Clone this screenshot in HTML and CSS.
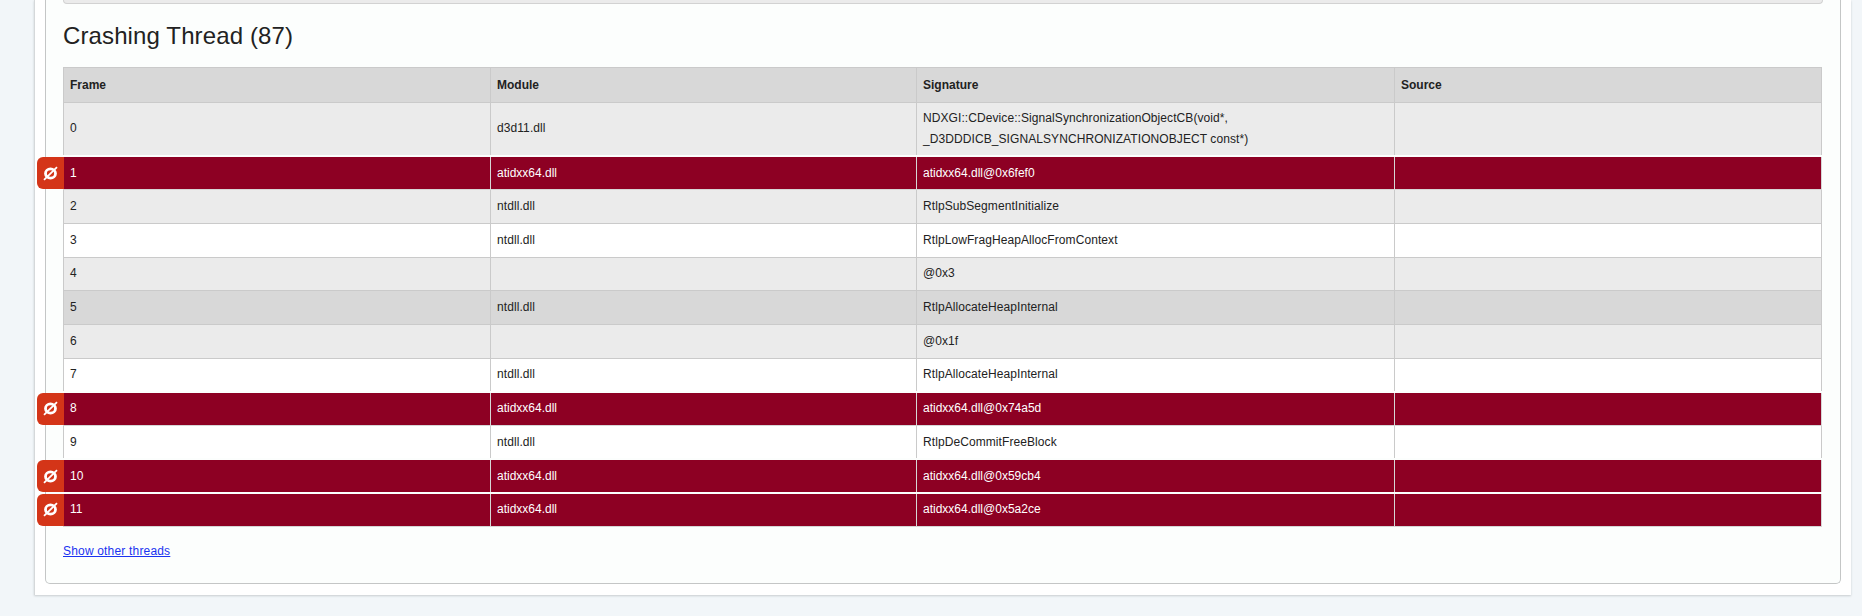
FILE: index.html
```html
<!DOCTYPE html>
<html lang="en">
<head>
<meta charset="utf-8">
<title>Crashing Thread</title>
<link rel="stylesheet" href="styles.css">
</head>
<body>
<svg class="defs" width="0" height="0" aria-hidden="true">
  <symbol id="no" viewBox="0 0 15 15">
    <ellipse cx="7.5" cy="7.5" rx="5" ry="4.6" fill="none" stroke="#fff" stroke-width="2.8"/>
    <path d="M1 13.8 14 1.2" fill="none" stroke="#fff" stroke-width="1.8"/>
  </symbol>
</svg>
<main class="page">
  <section class="panel">
    <div class="prev-box"></div>
    <h2 class="title">Crashing Thread (87)</h2>
    <table class="frames">
      <colgroup><col class="c1"><col class="c2"><col class="c3"><col class="c4"></colgroup>
      <thead>
        <tr><th>Frame</th><th>Module</th><th>Signature</th><th>Source</th></tr>
      </thead>
      <tbody>
        <tr class="g1 tall"><td>0</td><td>d3d11.dll</td><td>NDXGI::CDevice::SignalSynchronizationObjectCB(void*, _D3DDDICB_SIGNALSYNCHRONIZATIONOBJECT const*)</td><td></td></tr>
        <tr class="bad"><td><span class="flag"><svg class="no"><use href="#no"/></svg></span>1</td><td>atidxx64.dll</td><td>atidxx64.dll@0x6fef0</td><td></td></tr>
        <tr class="g1"><td>2</td><td>ntdll.dll</td><td>RtlpSubSegmentInitialize</td><td></td></tr>
        <tr><td>3</td><td>ntdll.dll</td><td>RtlpLowFragHeapAllocFromContext</td><td></td></tr>
        <tr class="g1"><td>4</td><td></td><td>@0x3</td><td></td></tr>
        <tr class="g2"><td>5</td><td>ntdll.dll</td><td>RtlpAllocateHeapInternal</td><td></td></tr>
        <tr class="g1"><td>6</td><td></td><td>@0x1f</td><td></td></tr>
        <tr><td>7</td><td>ntdll.dll</td><td>RtlpAllocateHeapInternal</td><td></td></tr>
        <tr class="bad"><td><span class="flag"><svg class="no"><use href="#no"/></svg></span>8</td><td>atidxx64.dll</td><td>atidxx64.dll@0x74a5d</td><td></td></tr>
        <tr><td>9</td><td>ntdll.dll</td><td>RtlpDeCommitFreeBlock</td><td></td></tr>
        <tr class="bad"><td><span class="flag"><svg class="no"><use href="#no"/></svg></span>10</td><td>atidxx64.dll</td><td>atidxx64.dll@0x59cb4</td><td></td></tr>
        <tr class="bad"><td><span class="flag"><svg class="no"><use href="#no"/></svg></span>11</td><td>atidxx64.dll</td><td>atidxx64.dll@0x5a2ce</td><td></td></tr>
      </tbody>
    </table>
    <p class="more"><a href="#">Show other threads</a></p>
  </section>
</main>
</body>
</html>
```

FILE: styles.css
```css
* { box-sizing: border-box; }
html, body { margin: 0; padding: 0; }
body {
  height: 616px;
  overflow: hidden;
  background: #f2f6f9;
  font-family: "Liberation Sans", Arial, sans-serif;
  color: #222;
}
.defs { display: block; height: 0; }
.page {
  margin: 0 0 0 34px;
  width: 1817px;
  height: 595px;
  padding: 0 10px 0 10px;
  background: #fff;
  border-left: 1px solid #d5d8da;
  box-shadow: 0 1px 2px #c8cccf;
}
.panel {
  height: 584px;
  padding: 0 17px;
  background: #fcfefd;
  border: 1px solid #c4c6c6;
  border-top: 0;
  border-radius: 0 0 5px 5px;
}
.prev-box {
  height: 4px;
  background: #ebebeb;
  border: 1px solid #d2d2d2;
  border-top: 0;
  border-radius: 0 0 6px 6px;
}
.title {
  margin: 16px 0 15px;
  font-size: 24px;
  line-height: 32px;
  font-weight: 400;
  letter-spacing: .12px;
  color: #222;
}
.frames {
  width: 1759px;
  table-layout: fixed;
  border-collapse: collapse;
  font-size: 12px;
  letter-spacing: .08px;
  background: #fff;
}
.c1 { width: 427px; }
.c2 { width: 426px; }
.c3 { width: 478px; }
.frames th, .frames td {
  border: 1px solid #cacaca;
  padding: 0 6px;
  height: 33.7px;
  text-align: left;
  line-height: 21px;
  color: #222;
}
.frames th {
  background: #d8d8d8;
  font-weight: 700;
  height: 34.5px;
  padding-top: 1px;
  letter-spacing: 0;
}
.g1 td { background: #ebebeb; }
.g2 td { background: #d8d8d8; }
.frames .tall td { height: 54px; }
.frames .bad td {
  background: #8d0023;
  color: #fff;
  letter-spacing: 0;
  border-color: #d6d6d6;
  border-top: 2px solid #fcfefd;
}
.bad td:first-child { position: relative; }
.flag {
  position: absolute;
  left: -27px;
  top: 0;
  bottom: 0;
  width: 27px;
  display: flex;
  align-items: center;
  justify-content: center;
  background: #d43518;
  border-radius: 6px 0 0 6px;
}
.no { display: block; width: 15px; height: 15px; }
.more { margin: 16px 0 0; font-size: 12px; line-height: 16px; letter-spacing: .18px; }
.more a { color: #1a33f0; }
```
